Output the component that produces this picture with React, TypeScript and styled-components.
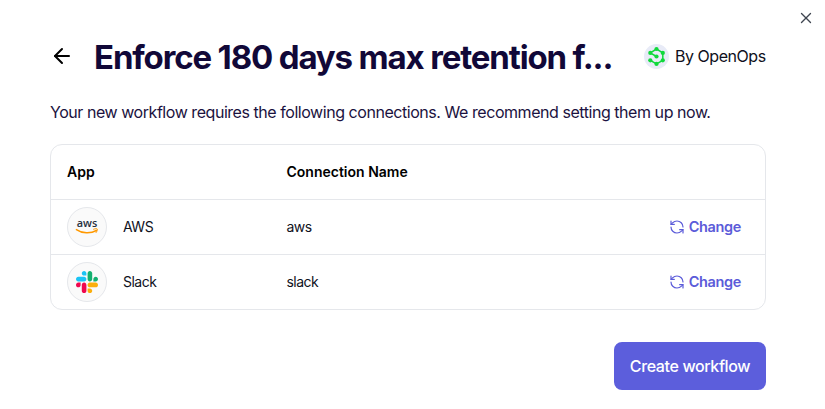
import React from "react";
import styled, { createGlobalStyle } from "styled-components";
import { ArrowLeft, RefreshCcw, X } from "lucide-react";

const GlobalStyle = createGlobalStyle`
  *, *::before, *::after { box-sizing: border-box; }
  body { margin: 0; background: #fff; font-family: Inter, "Liberation Sans", sans-serif; color: #0f1020; }
  button { font-family: inherit; border: 0; background: none; padding: 0; margin: 0; cursor: pointer; }
`;

const Dialog = styled.main`
  position: relative;
  width: 825px;
  height: 409px;
  padding: 34px 59px 19px 50px;
  display: flex;
  flex-direction: column;
  background: #fff;
`;

const CloseButton = styled.button`
  position: absolute;
  top: 9px;
  right: 10px;
  width: 18px;
  height: 18px;
  display: flex;
  color: #3f4550;
`;

const Header = styled.header`
  display: flex;
  align-items: center;
  height: 46px;
`;

const BackButton = styled.button`
  display: flex;
  flex: none;
  width: 24px;
  height: 24px;
  color: #000;
  margin-top: -2px;
`;

const Title = styled.h1`
  margin: 0 0 0 20px;
  width: 530px;
  flex: none;
  font-size: 33px;
  line-height: 46px;
  font-weight: 650;
  letter-spacing: -1.15px;
  color: #110838;
  white-space: nowrap;
`;

const Author = styled.div`
  display: flex;
  align-items: center;
  margin-left: 20px;
  margin-top: -2px;
  gap: 6px;
  font-size: 16px;
  letter-spacing: -0.46px;
  white-space: nowrap;
`;

const Intro = styled.p`
  margin: 20px 0 0;
  height: 24px;
  line-height: 24px;
  font-size: 16px;
  letter-spacing: -0.45px;
  color: #1b1240;
  white-space: nowrap;
`;

const Table = styled.section`
  margin-top: 20px;
  height: 166px;
  flex: none;
  border: 1px solid #e5e7eb;
  border-radius: 12px;
`;

const Row = styled.div<{ $head?: boolean }>`
  display: grid;
  grid-template-columns: 219.5px 1fr auto;
  align-items: center;
  height: ${(p) => (p.$head ? 54 : 55)}px;
  padding: 0 24px 0 16px;
  font-size: 14px;
  font-weight: ${(p) => (p.$head ? 600 : 400)};
  color: ${(p) => (p.$head ? "#000" : "#10121d")};
  & + & { border-top: 1px solid #e5e7eb; }
`;

const AppCell = styled.div`
  display: flex;
  align-items: center;
  gap: 16px;
`;

const Logo = styled.span`
  width: 40px;
  height: 40px;
  display: grid;
  place-items: center;
  border: 1px solid #e5e7eb;
  border-radius: 50%;
  background: #fafafa;
`;

const Label = styled.span<{ $spacing?: number }>`
  letter-spacing: ${(p) => p.$spacing ?? 0}px;
  padding-bottom: 2px;
`;

const ChangeButton = styled.button`
  display: flex;
  align-items: center;
  gap: 4px;
  color: #5b5bd9;
  font-size: 14.5px;
  font-weight: 600;
  letter-spacing: -0.35px;
`;

const Footer = styled.footer`
  display: flex;
  justify-content: flex-end;
  margin-top: 32px;
`;

const CreateButton = styled.button`
  width: 152px;
  height: 48px;
  border-radius: 8px;
  background: #5c5edc;
  color: #fff;
  font-size: 16px;
  font-weight: 500;
  letter-spacing: -0.38px;
  white-space: nowrap;
`;

const OpenOpsLogo = () => (
  <svg width="25" height="25" viewBox="0 0 25 25">
    <circle cx="12.5" cy="12.5" r="12.5" fill="#e8ebf7" />
    <path d="M12.5 12.5 6.3 8.9 12.5 5l6.3 3.9v7.5L12.5 20l-6.2-3.6" fill="none" stroke="#10d93c" strokeWidth="1.5" />
    <g fill="#10d93c">
      <circle cx="12.5" cy="5" r="2.1" />
      <circle cx="18.8" cy="8.9" r="2.1" />
      <circle cx="18.8" cy="16.3" r="2.1" />
      <circle cx="12.5" cy="19.9" r="2.1" />
      <circle cx="6.3" cy="16.3" r="2.1" />
      <circle cx="6.3" cy="8.9" r="2.1" />
      <circle cx="12.5" cy="12.5" r="2.1" />
    </g>
  </svg>
);

const AwsLogo = () => (
  <svg width="24" height="20" viewBox="0 0 24 20" overflow="visible">
    <text x="12" y="10.2" textAnchor="middle" textLength="20.5" lengthAdjust="spacingAndGlyphs" fontFamily="Open Sans, sans-serif" fontWeight="600" fontSize="11.5" fill="#252f3e">aws</text>
    <path d="M1.4 12.6c5.8 4 14.2 4.3 20 .9" fill="none" stroke="#f90" strokeWidth="1.5" strokeLinecap="round" />
    <path d="M18.6 12.2c1.6-.7 3.5-.6 3.7-.2.2.5-.2 2.5-1.2 3.6" fill="none" stroke="#f90" strokeWidth="1" strokeLinecap="round" />
  </svg>
);

const SlackLogo = () => (
  <svg width="22" height="22" viewBox="0 0 122.8 122.8">
    <path fill="#f0094f" d="M25.8 77.6c0 7.1-5.8 12.9-12.9 12.9S0 84.7 0 77.6s5.8-12.9 12.9-12.9h12.9zm6.5 0c0-7.1 5.8-12.9 12.9-12.9s12.9 5.8 12.9 12.9v32.3c0 7.1-5.8 12.9-12.9 12.9s-12.9-5.8-12.9-12.9z" />
    <path fill="#1bc4f5" d="M45.2 25.8c-7.1 0-12.9-5.8-12.9-12.9S38.1 0 45.2 0s12.9 5.8 12.9 12.9v12.9zm0 6.5c7.1 0 12.9 5.8 12.9 12.9s-5.8 12.9-12.9 12.9H12.9C5.8 58.1 0 52.3 0 45.2s5.8-12.9 12.9-12.9z" />
    <path fill="#13b070" d="M97 45.2c0-7.1 5.8-12.9 12.9-12.9s12.9 5.8 12.9 12.9-5.8 12.9-12.9 12.9H97zm-6.5 0c0 7.1-5.8 12.9-12.9 12.9s-12.9-5.8-12.9-12.9V12.9C64.7 5.8 70.5 0 77.6 0s12.9 5.8 12.9 12.9z" />
    <path fill="#fbae0b" d="M77.6 97c7.1 0 12.9 5.8 12.9 12.9s-5.8 12.9-12.9 12.9-12.9-5.8-12.9-12.9V97zm0-6.5c-7.1 0-12.9-5.8-12.9-12.9s5.8-12.9 12.9-12.9h32.3c7.1 0 12.9 5.8 12.9 12.9s-5.8 12.9-12.9 12.9z" />
  </svg>
);

const connections = [
  { app: "AWS", name: "aws", logo: <AwsLogo /> },
  { app: "Slack", name: "slack", logo: <SlackLogo /> },
];

export default function App() {
  return (
    <>
      <GlobalStyle />
      <Dialog>
        <CloseButton aria-label="Close"><X size={18} strokeWidth={1.8} /></CloseButton>
        <Header>
          <BackButton aria-label="Back"><ArrowLeft size={24} strokeWidth={2} /></BackButton>
          <Title>Enforce 180 days max retention f...</Title>
          <Author><OpenOpsLogo /><span>By OpenOps</span></Author>
        </Header>
        <Intro>Your new workflow requires the following connections. We recommend setting them up now.</Intro>
        <Table>
          <Row $head><Label>App</Label><Label>Connection Name</Label></Row>
          {connections.map((c) => (
            <Row key={c.app}>
              <AppCell><Logo>{c.logo}</Logo><Label $spacing={-0.5}>{c.app}</Label></AppCell>
              <Label $spacing={-0.55}>{c.name}</Label>
              <ChangeButton><RefreshCcw size={16} strokeWidth={1.8} /><Label $spacing={-0.35}>Change</Label></ChangeButton>
            </Row>
          ))}
        </Table>
        <Footer><CreateButton>Create workflow</CreateButton></Footer>
      </Dialog>
    </>
  );
}
